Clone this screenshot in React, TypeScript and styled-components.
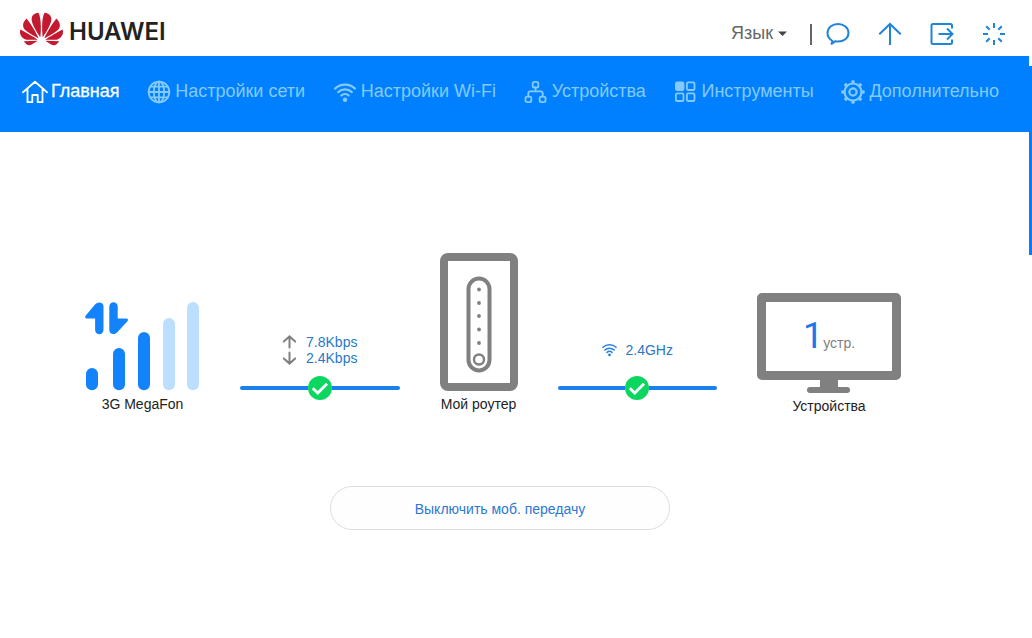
import React from "react";
import styled, { createGlobalStyle } from "styled-components";

const GlobalStyle = createGlobalStyle`
  *, *::before, *::after { box-sizing: border-box; }
  html, body { margin: 0; background: #fff; }
  body { font-family: "Liberation Sans", Arial, sans-serif; font-size: 14px; color: #222; }
`;

const Page = styled.div`
  display: flex;
  min-height: 100vh;
`;

const Content = styled.div`
  flex: 1;
  min-width: 0;
`;

const ScrollRail = styled.div`
  width: 3px;
  padding-top: 66px;
`;

const ScrollThumb = styled.div`
  height: 189px;
  background: #0080ff;
`;

const Header = styled.header`
  display: flex;
  align-items: center;
  justify-content: space-between;
  height: 56px;
  padding: 2px 23px 0 20px;
`;

const Brand = styled.a`
  display: flex;
  align-items: center;
  gap: 6px;
  color: #222;
  text-decoration: none;
`;

const BrandName = styled.span`
  padding-top: 6px;
  font-family: Inter, "Liberation Sans", sans-serif;
  font-size: 24px;
  line-height: 28px;
  font-weight: 600;
`;

const HeaderTools = styled.div`
  display: flex;
  align-items: center;
  padding-top: 10px;
`;

const Language = styled.label`
  display: flex;
  align-items: center;
  gap: 4px;
  padding-bottom: 2px;
  color: #666;
`;

const LanguageSelect = styled.select`
  appearance: none;
  border: 0;
  padding: 0;
  background: transparent;
  color: inherit;
  font: 18px/22px "Liberation Sans", Arial, sans-serif;
`;

const Divider = styled.span`
  width: 2px;
  height: 21px;
  margin: 0 14px 0 23px;
  background: #666;
`;

const ToolButtons = styled.div`
  display: flex;
  gap: 28px;
`;

const IconButton = styled.button`
  display: block;
  width: 24px;
  height: 24px;
  padding: 0;
  border: 0;
  background: transparent;
  color: #2084d8;
`;

const Nav = styled.nav`
  height: 76px;
  padding: 24px 30px 0 22px;
  background: #0080ff;
`;

const NavList = styled.ul`
  display: flex;
  justify-content: space-between;
  margin: 0;
  padding: 0;
  list-style: none;
`;

const NavLink = styled.a<{ $active?: boolean }>`
  display: flex;
  align-items: flex-start;
  gap: 3px;
  color: ${(p) => (p.$active ? "#fff" : "#84caff")};
  font-size: 18px;
  line-height: 22px;
  white-space: nowrap;
  text-decoration: none;
  -webkit-text-stroke: ${(p) => (p.$active ? "0.3px #fff" : "0")};
`;

const Main = styled.main`
  display: flex;
  flex-direction: column;
  align-items: center;
  gap: 71px;
  padding: 121px 29px 40px 0;
`;

const Topology = styled.section`
  display: flex;
  align-items: flex-start;
  gap: 40px;
  width: 100%;
  max-width: 830px;
  padding-right: 14px;
`;

const Node = styled.figure`
  display: flex;
  flex-direction: column;
  align-items: center;
  gap: 4px;
  margin: 0;
`;

const NodeName = styled.figcaption`
  font-size: 14px;
  line-height: 18px;
  white-space: nowrap;
`;

const Link = styled.div`
  flex: 1;
  display: flex;
  flex-direction: column;
  justify-content: flex-end;
  gap: 10px;
  height: 147px;
`;

const LinkInfo = styled.div`
  display: flex;
  flex-direction: column;
  justify-content: center;
  align-items: center;
  height: 32px;
`;

const LinkStat = styled.div`
  display: flex;
  align-items: center;
  gap: 9px;
  color: #2a78c8;
  font-size: 14px;
  line-height: 16px;
`;

const LinkTrack = styled.div`
  display: flex;
  align-items: center;
`;

const TrackSegment = styled.span<{ $end?: boolean }>`
  flex: 1;
  height: 4px;
  border-radius: ${(p) => (p.$end ? "0 2px 2px 0" : "2px 0 0 2px")};
  background: #1a80ec;
`;

const MonitorArt = styled.div`
  display: flex;
  flex-direction: column;
  align-items: center;
  padding-top: 40px;
`;

const Screen = styled.div`
  display: flex;
  align-items: baseline;
  justify-content: center;
  width: 144px;
  height: 87px;
  padding-top: 14px;
  border: 9px solid #808080;
  border-radius: 5px;
`;

const DeviceCount = styled.span`
  color: #1a78e8;
  font-family: Roboto, "Liberation Sans", sans-serif;
  font-size: 36px;
  line-height: 40px;
`;

const DeviceUnit = styled.span`
  color: #808080;
  font-size: 14px;
`;

const DataButton = styled.button`
  width: 340px;
  height: 44px;
  padding: 2px 0 0;
  border: 1px solid #dedede;
  border-radius: 22px;
  background: #fefefe;
  color: #2a78d0;
  font: 14px/18px "Liberation Sans", Arial, sans-serif;
`;

const HuaweiLogo = () => (
  <svg width="43" height="34" viewBox="0 2.8 24 18.4" fill="#c41a30" aria-hidden="true">
    <path d="M3.67 6.14S1.82 7.91 1.72 9.78v.35c.08 1.51 1.22 2.4 1.22 2.4 1.83 1.79 6.26 4.04 7.3 4.55 0 0 .06.03.1-.01l.02-.04v-.04C7.52 10.8 3.67 6.14 3.67 6.14zM9.65 18.6c-.02-.08-.1-.08-.1-.08l-7.38.26c.8 1.43 2.15 2.53 3.56 2.2.96-.25 3.16-1.78 3.88-2.3.06-.05.04-.09.04-.09zm.08-.78C6.49 15.63.21 12.28.21 12.28c-.15.46-.2.9-.21 1.3v.07c0 1.07.4 1.82.4 1.82.8 1.69 2.34 2.2 2.34 2.2.7.3 1.4.31 1.4.31.12.02 4.4 0 5.54 0 .05 0 .08-.05.08-.05v-.06c0-.03-.03-.05-.03-.05zM9.06 3.19a3.42 3.42 0 00-2.57 3.15v.41c.03.6.16 1.05.16 1.05.66 2.9 3.86 7.65 4.55 8.65.05.05.1.03.1.03a.1.1 0 00.06-.1c1.06-10.6-1.11-13.42-1.11-13.42-.32.02-1.19.23-1.19.23zm8.299 2.27s-.49-1.8-2.44-2.28c0 0-.57-.14-1.17-.22 0 0-2.18 2.81-1.12 13.43.01.07.06.08.06.08.07.03.1-.03.1-.03.72-1.03 3.9-5.76 4.55-8.64 0 0 .36-1.4.02-2.34zm-2.92 13.07s-.07 0-.09.05c0 0-.01.07.03.1.7.51 2.85 2 3.88 2.3 0 0 .16.05.43.06h.14c.69-.02 1.9-.37 3-2.26l-7.4-.25zm7.83-8.41c.14-2.06-1.94-3.97-1.94-3.98 0 0-3.85 4.66-6.67 10.8 0 0-.03.08.02.13l.04.01h.06c1.06-.53 5.46-2.77 7.28-4.54 0 0 1.15-.93 1.21-2.42zm1.52 2.14s-6.28 3.37-9.52 5.55c0 0-.05.04-.03.11 0 0 .03.06.07.06 1.16 0 5.56 0 5.67-.02 0 0 .57-.02 1.27-.29 0 0 1.56-.5 2.37-2.27 0 0 .73-1.45.17-3.14z" />
  </svg>
);

const ToolIcon = ({ children }: { children: React.ReactNode }) => (
  <svg width="24" height="24" viewBox="0 0 24 24" fill="none" stroke="currentColor" strokeWidth="2" aria-hidden="true">
    {children}
  </svg>
);

const NavIcon = ({ children }: { children: React.ReactNode }) => (
  <svg width="26" height="26" viewBox="0 0 26 26" fill="none" stroke="currentColor" strokeWidth="1.8" strokeLinejoin="round" strokeLinecap="round" aria-hidden="true">
    {children}
  </svg>
);

const gearTeeth = [0, 45, 90, 135, 180, 225, 270, 315];

const navItems = [
  {
    label: "Главная",
    active: true,
    icon: (
      <path d="M1 12.3L13 1.8l12 10.5M5.5 9.5v12.7h4.8v-7.2h5.4v7.2h4.8V9.5" />
    ),
  },
  {
    label: "Настройки сети",
    icon: (
      <>
        <circle cx="13" cy="12" r="10.3" />
        <ellipse cx="13" cy="12" rx="5.2" ry="10.3" />
        <path d="M13 1.7v20.6M2.7 12h20.6M4.3 6.6h17.4M4.3 17.4h17.4" />
      </>
    ),
  },
  {
    label: "Настройки Wi-Fi",
    icon: (
      <>
        <path d="M3 8.6a14.5 14.5 0 0 1 20 0M6.2 12.1a10 10 0 0 1 13.6 0M9.3 15.5a5.6 5.6 0 0 1 7.4 0" strokeWidth="2.2" />
        <circle cx="13" cy="19.8" r="2.2" fill="currentColor" stroke="none" />
      </>
    ),
  },
  {
    label: "Устройства",
    icon: (
      <>
        <rect x="9.7" y="1.9" width="5.6" height="5.6" rx="1.6" />
        <rect x="2.5" y="16.7" width="5.8" height="5.4" rx="1.6" />
        <rect x="16.7" y="16.7" width="5.8" height="5.4" rx="1.6" />
        <path d="M12.5 7.5v3.7M5.3 16.5v-3.2q0-2 2-2h10.4q2 0 2 2v3.2" />
      </>
    ),
  },
  {
    label: "Инструменты",
    icon: (
      <>
        <rect x="3.9" y="2.4" width="7.6" height="7.6" rx="1.3" fill="currentColor" />
        <rect x="14.9" y="2.4" width="7.6" height="7.6" rx="1.3" />
        <rect x="3.9" y="13.4" width="7.6" height="7.6" rx="1.3" />
        <rect x="14.9" y="13.4" width="7.6" height="7.6" rx="1.3" />
      </>
    ),
  },
  {
    label: "Дополнительно",
    icon: (
      <>
        <circle cx="13" cy="12" r="8.5" strokeWidth="2.2" />
        <circle cx="13" cy="12" r="3.6" strokeWidth="2.2" />
        {gearTeeth.map((a) => (
          <path key={a} d="M12.6 1.7h.8" transform={`rotate(${a} 13 12)`} strokeWidth="2.8" />
        ))}
      </>
    ),
  },
];

const SpeedArrow = ({ down }: { down?: boolean }) => (
  <svg width="15" height="14" viewBox="0 0 15 14" fill="none" stroke="#808080" strokeWidth="2" strokeLinecap="round" aria-hidden="true">
    <path d={down ? "M7.5 1.5v11M1.8 7.4l5.7 5.2 5.7-5.2" : "M7.5 12.5v-11M1.8 6.6l5.7-5.2 5.7 5.2"} />
  </svg>
);

const WifiSmall = () => (
  <svg width="15" height="14" viewBox="0 0 15 14" fill="none" stroke="#2a80d8" strokeWidth="1.5" strokeLinecap="round" aria-hidden="true">
    <path d="M.9 4.3a9.8 9.8 0 0 1 13.2 0M2.9 7a6.6 6.6 0 0 1 9.2 0M5 9.4a3.7 3.7 0 0 1 5 0" />
    <circle cx="7.5" cy="11.9" r="1.4" fill="#2a80d8" stroke="none" />
  </svg>
);

const CheckBadge = () => (
  <svg width="24" height="24" viewBox="0 0 24 24" role="img" aria-label="OK">
    <circle cx="12" cy="12" r="12" fill="#0bd660" />
    <path d="M4.8 12.2l5 4.9 9.2-9.3" fill="none" stroke="#fff" strokeWidth="2.8" />
  </svg>
);

const Track = () => (
  <LinkTrack>
    <TrackSegment />
    <CheckBadge />
    <TrackSegment $end />
  </LinkTrack>
);

const signalBars = [
  { x: 1, y: 115, on: true },
  { x: 28, y: 95, on: true },
  { x: 53, y: 79, on: true },
  { x: 78, y: 65, on: false },
  { x: 102, y: 49, on: false },
];

const SignalArt = () => (
  <svg width="115" height="138" viewBox="0 0 115 138" aria-hidden="true">
    {signalBars.map((b) => (
      <rect key={b.x} x={b.x} y={b.y} width="12" height={137.3 - b.y} rx="6" fill={b.on ? "#1283fa" : "#bcdfff"} />
    ))}
    <path
      fill="#1283fa"
      d="M10 51.5C13 48 18.5 49 18.5 53.5V77a4.2 4.2 0 0 1-8.4 0V65.5H1.5Q-.8 65 .8 62.4zM24.3 53.5a4.2 4.2 0 0 1 8.4 0V65.5H41.5Q44.2 66 42.2 68.5L32.5 79C29.5 82.5 24.3 81.5 24.3 77z"
    />
  </svg>
);

const RouterArt = () => (
  <svg width="78" height="138" viewBox="0 0 78 138" fill="none" stroke="#808080" aria-hidden="true">
    <rect x="4" y="4" width="70" height="130" rx="4" strokeWidth="8" />
    <rect x="28.5" y="25.5" width="21" height="92" rx="10.5" strokeWidth="4" />
    <circle cx="39" cy="106.5" r="5" strokeWidth="2.4" />
    {[36.5, 50, 63, 76.5, 90].map((cy) => (
      <circle key={cy} cx="39" cy={cy} r="1.9" fill="#808080" stroke="none" />
    ))}
  </svg>
);

const MonitorStand = () => (
  <svg width="46" height="13" viewBox="0 0 46 13" fill="#808080" aria-hidden="true">
    <path d="M14 0h18v7h9a3 3 0 0 1 0 6H4a3 3 0 0 1 0-6h10z" />
  </svg>
);

export default function App() {
  return (
    <>
      <GlobalStyle />
      <Page>
        <Content>
          <Header>
            <Brand href="#">
              <HuaweiLogo />
              <BrandName>HUAWEI</BrandName>
            </Brand>
            <HeaderTools>
              <Language>
                <LanguageSelect aria-label="Язык">
                  <option>Язык</option>
                </LanguageSelect>
                <svg width="9" height="5" viewBox="0 0 9 5" fill="#444" aria-hidden="true">
                  <path d="M0 .5h9L4.5 5z" />
                </svg>
              </Language>
              <Divider />
              <ToolButtons>
                <IconButton aria-label="Сообщения">
                  <ToolIcon>
                    <path d="M6.5 19C3.2 17 1.5 14.3 1.5 11 1.5 5.8 6.2 2 12 2s10.5 3.8 10.5 9S17.8 19.5 12 19.5c-.9 0-1.7-.1-2.5-.3L5.5 21.8z" strokeLinejoin="round" />
                  </ToolIcon>
                </IconButton>
                <IconButton aria-label="Обновление">
                  <ToolIcon>
                    <path d="M12 23V2M1.3 12.3L12 2l10.7 10.3" />
                  </ToolIcon>
                </IconButton>
                <IconButton aria-label="Выход">
                  <ToolIcon>
                    <path d="M22 6.5V3.5q0-1.5-1.5-1.5H3Q1.500 2 1.5 3.5v17Q1.5 22 3 22h17.5q1.5 0 1.5-1.5v-3M8.5 12h14M17 6.5l5.5 5.5-5.5 5.5" />
                  </ToolIcon>
                </IconButton>
                <IconButton aria-label="Перезагрузка">
                  <ToolIcon>
                    <path d="M12 1v5M12 18v5M1 12h5M18 12h5M4.2 4.2l3.5 3.5M16.3 16.3l3.5 3.5M4.2 19.8l3.5-3.5M16.3 7.7l3.5-3.5" />
                  </ToolIcon>
                </IconButton>
              </ToolButtons>
            </HeaderTools>
          </Header>

          <Nav>
            <NavList>
              {navItems.map((item) => (
                <li key={item.label}>
                  <NavLink href="#" $active={item.active}>
                    <NavIcon>{item.icon}</NavIcon>
                    {item.label}
                  </NavLink>
                </li>
              ))}
            </NavList>
          </Nav>

          <Main>
            <Topology>
              <Node>
                <SignalArt />
                <NodeName>3G MegaFon</NodeName>
              </Node>
              <Link>
                <LinkInfo>
                  <LinkStat>
                    <SpeedArrow />
                    7.8Kbps
                  </LinkStat>
                  <LinkStat>
                    <SpeedArrow down />
                    2.4Kbps
                  </LinkStat>
                </LinkInfo>
                <Track />
              </Link>
              <Node>
                <RouterArt />
                <NodeName>Мой роутер</NodeName>
              </Node>
              <Link>
                <LinkInfo>
                  <LinkStat>
                    <WifiSmall />
                    2.4GHz
                  </LinkStat>
                </LinkInfo>
                <Track />
              </Link>
              <Node>
                <MonitorArt>
                  <Screen>
                    <DeviceCount>1</DeviceCount>
                    <DeviceUnit>устр.</DeviceUnit>
                  </Screen>
                  <MonitorStand />
                </MonitorArt>
                <NodeName>Устройства</NodeName>
              </Node>
            </Topology>
            <DataButton>Выключить моб. передачу</DataButton>
          </Main>
        </Content>
        <ScrollRail>
          <ScrollThumb />
        </ScrollRail>
      </Page>
    </>
  );
}
